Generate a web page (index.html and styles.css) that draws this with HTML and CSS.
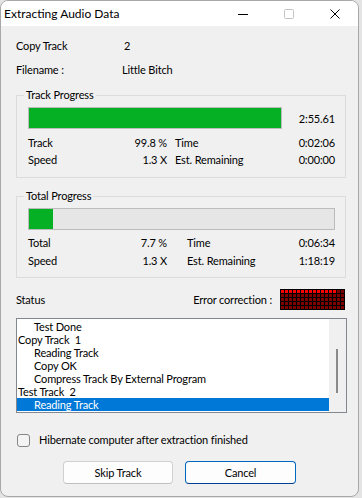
FILE: index.html
```html
<!DOCTYPE html>
<html lang="en">
<head>
    <meta charset="UTF-8">
    <meta name="viewport" content="width=device-width, initial-scale=1.0">
    <title>Extracting Audio Data</title>
    <link rel="stylesheet" href="styles.css">
</head>
<body>

<div class="window">
    <div class="titlebar">
        <span class="title">Extracting Audio Data</span>
        <div class="controls">
            <span class="ctrl">
                <svg width="10" height="10" viewBox="0 0 10 10"><path d="M0 5.5h10" stroke="#000" stroke-width="1"/></svg>
            </span>
            <span class="ctrl">
                <svg width="10" height="10" viewBox="0 0 10 10"><rect x="0.5" y="0.5" width="9" height="9" rx="1" fill="none" stroke="#c4c4c4"/></svg>
            </span>
            <span class="ctrl">
                <svg width="10" height="10" viewBox="0 0 10 10"><path d="M0.5 0.5l9 9M9.5 0.5l-9 9" stroke="#000" stroke-width="1"/></svg>
            </span>
        </div>
    </div>

    <div class="content">
        <div class="info-row">
            <span class="info-label">Copy Track</span>
            <span class="info-value info-num">2</span>
        </div>
        <div class="info-row info-row-second">
            <span class="info-label">Filename :</span>
            <span class="info-value">Little Bitch</span>
        </div>

        <fieldset class="group group-track">
            <legend>Track Progress</legend>
            <div class="bar-row">
                <div class="bar bar-short"><div class="bar-fill" style="width: 100%"></div></div>
                <span class="bar-time">2:55.61</span>
            </div>
            <div class="stats stats-track">
                <span>Track</span><span class="num">99.8 %</span><span>Time</span><span class="num">0:02:06</span>
                <span>Speed</span><span class="num">1.3 X</span><span>Est. Remaining</span><span class="num">0:00:00</span>
            </div>
        </fieldset>

        <fieldset class="group group-total">
            <legend>Total Progress</legend>
            <div class="bar"><div class="bar-fill" style="width: 8%"></div></div>
            <div class="stats stats-total">
                <span>Total</span><span class="num">7.7 %</span><span>Time</span><span class="num">0:06:34</span>
                <span>Speed</span><span class="num">1.3 X</span><span>Est. Remaining</span><span class="num">1:18:19</span>
            </div>
        </fieldset>

        <div class="status-row">
            <span>Status</span>
            <div class="error-box">
                <span>Error correction :</span>
                <svg class="error-grid" width="65" height="21" viewBox="0 0 65 21">
                    <defs>
                        <pattern id="dark" width="4" height="4" patternUnits="userSpaceOnUse">
                            <rect x="1" y="1" width="3" height="3" fill="#7c0000"/>
                        </pattern>
                        <pattern id="bright" width="4" height="4" patternUnits="userSpaceOnUse">
                            <rect x="1" y="1" width="3" height="3" fill="#ff0000"/>
                        </pattern>
                    </defs>
                    <rect width="65" height="21" fill="#000"/>
                    <rect width="65" height="21" fill="url(#dark)"/>
                    <rect width="57" height="5" fill="url(#bright)"/>
                </svg>
            </div>
        </div>

        <div class="listbox">
            <ul class="log">
                <li class="sub">Test Done</li>
                <li>Copy Track&nbsp; 1</li>
                <li class="sub">Reading Track</li>
                <li class="sub">Copy OK</li>
                <li class="sub">Compress Track By External Program</li>
                <li>Test Track&nbsp; 2</li>
                <li class="sub selected">Reading Track</li>
            </ul>
            <div class="scrollbar"><div class="thumb"></div></div>
        </div>

        <label class="check-row">
            <span class="checkbox"></span>
            Hibernate computer after extraction finished
        </label>

        <div class="buttons">
            <button class="btn">Skip Track</button>
            <button class="btn btn-default">Cancel</button>
        </div>
    </div>
</div>

</body>
</html>
```

FILE: styles.css
```css
body {
    margin: 0;
    background-color: #e4e4e4;
    font-family: Lato, "Noto Sans", sans-serif;
    font-size: 11px;
    letter-spacing: -0.15px;
    color: #000;
}
.window {
    box-sizing: border-box;
    width: 359px;
    height: 497px;
    background-color: #f0f0f0;
    border: 1px solid #a8a8a8;
    border-radius: 8px;
    overflow: hidden;
}
.titlebar {
    display: flex;
    align-items: center;
    justify-content: space-between;
    height: 25px;
    background-color: #fff;
}
.title {
    padding-left: 3px;
    font-size: 12px;
    letter-spacing: 0;
}
.controls {
    display: flex;
}
.ctrl {
    display: flex;
    align-items: center;
    justify-content: center;
    width: 46px;
    height: 25px;
}
.content {
    padding: 12px 0 0 15px;
}
.info-row {
    display: flex;
    line-height: 16px;
}
.info-row-second {
    margin-top: 8px;
}
.info-label {
    width: 106px;
}
.info-num {
    padding-left: 2px;
}

/* group boxes */
.group {
    width: 330px;
    box-sizing: border-box;
    margin: 9px 0 0 0;
    padding: 4px 10px 9px 11px;
    border: 1px solid #dcdcdc;
}
.group legend {
    padding: 0 2px;
    margin-left: -4px;
    line-height: 16px;
}
.group-total {
    margin-top: 10px;
    padding-bottom: 7px;
}
.bar-row {
    display: flex;
    align-items: center;
    justify-content: space-between;
}
.bar {
    box-sizing: border-box;
    height: 22px;
    border: 1px solid #bcbcbc;
    background-color: #e6e6e6;
}
.bar-short {
    width: 254px;
}
.bar-fill {
    height: 100%;
    background-color: #06b025;
}
.stats {
    display: grid;
    grid-template-columns: 80px 59px 8px 85px 1fr;
    margin-top: 5px;
    line-height: 17px;
    white-space: nowrap;
}
.stats span:nth-child(4n+3) {
    grid-column: 4;
}
.stats-total {
    grid-template-columns: 80px 59px 20px 73px 1fr;
    margin-top: 4px;
    line-height: 18px;
}
.num {
    text-align: right;
}

/* status */
.status-row {
    display: flex;
    align-items: center;
    justify-content: space-between;
    width: 329px;
    margin-top: 11px;
    line-height: 16px;
}
.error-box {
    display: flex;
    align-items: center;
    gap: 8px;
}
.error-grid {
    display: block;
}
.listbox {
    display: flex;
    box-sizing: border-box;
    width: 331px;
    height: 95px;
    margin-top: 8px;
    border: 1px solid #828790;
    background-color: #fff;
}
.log {
    flex: 1;
    list-style: none;
    margin: 0;
    padding: 1px 0 0 0;
}
.log li {
    height: 13px;
    line-height: 13px;
    padding-left: 1px;
    white-space: nowrap;
}
.log li.sub {
    padding-left: 17px;
}
.log li.selected {
    background-color: #0078d7;
    color: #fff;
}
.scrollbar {
    width: 17px;
    background-color: #f0f0f0;
}
.thumb {
    width: 2px;
    height: 44px;
    margin: 30px 0 0 7px;
    background-color: #8a8a8a;
}

/* footer */
.check-row {
    display: flex;
    align-items: center;
    gap: 9px;
    margin-top: 19px;
    padding-left: 1px;
    line-height: 16px;
}
.checkbox {
    box-sizing: border-box;
    width: 13px;
    height: 13px;
    border: 1px solid #858585;
    border-radius: 3px;
    background-color: #f4f4f4;
}
.buttons {
    display: flex;
    gap: 12px;
    margin: 13px 0 0 47px;
}
.btn {
    width: 110px;
    height: 23px;
    font-family: inherit;
    font-size: 11px;
    letter-spacing: inherit;
    color: #000;
    background-color: #fdfdfd;
    border: 1px solid #d0d0d0;
    border-bottom-color: #c0c0c0;
    border-radius: 4px;
    padding: 0;
}
.btn-default {
    width: 111px;
    border-color: #0067c0;
    border-bottom-color: #003e92;
}
```
